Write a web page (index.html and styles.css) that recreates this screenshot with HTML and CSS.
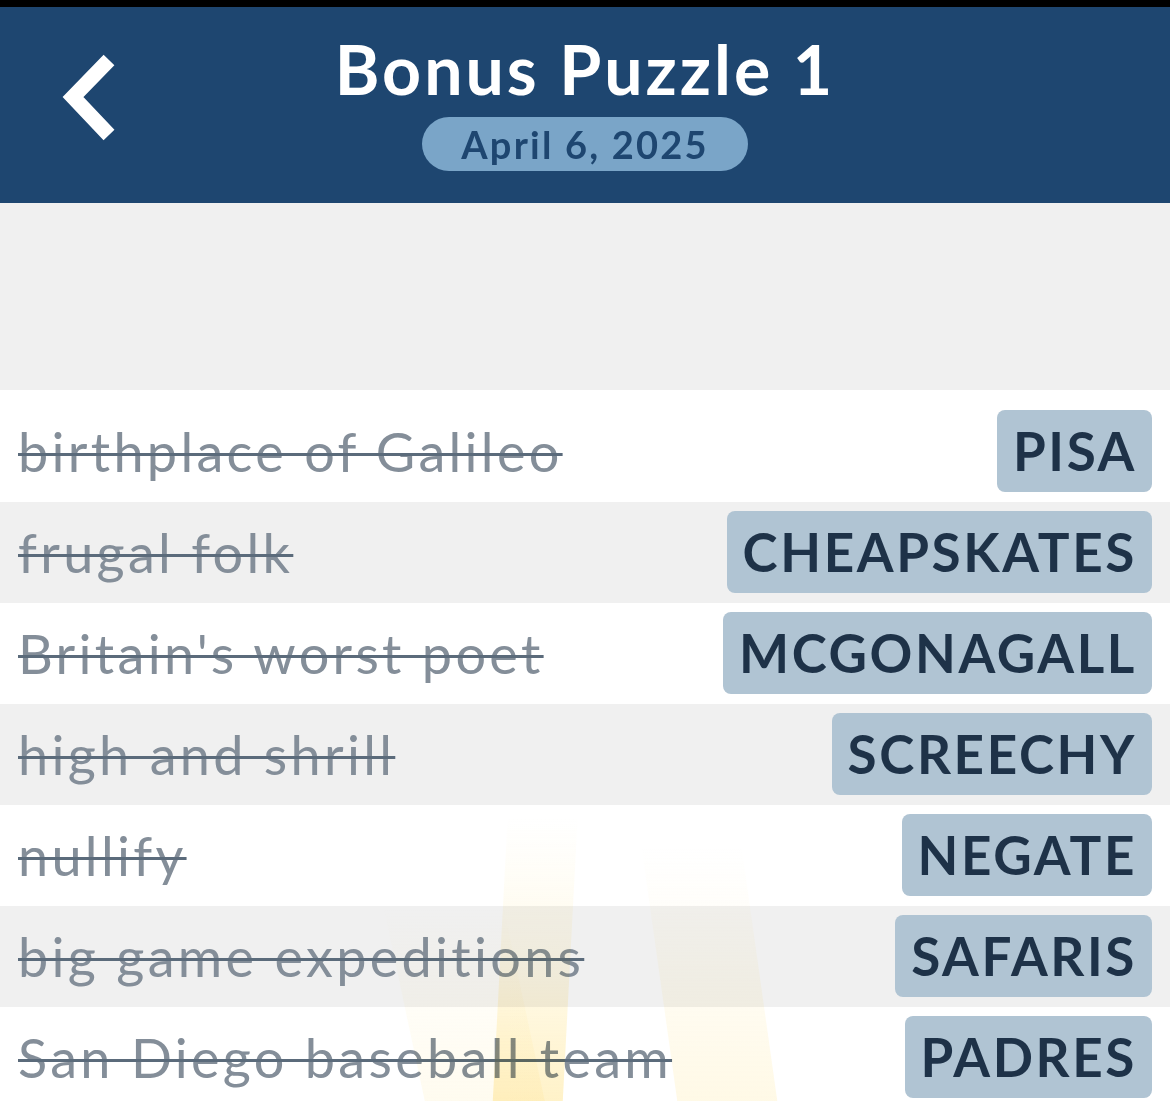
FILE: index.html
```html
<!DOCTYPE html>
<html>
<head>
<meta charset="utf-8">
<link rel="stylesheet" href="styles.css">
</head>
<body>
<div class="topbar"></div>
<header class="header">
  <svg class="back" width="70" height="110" viewBox="0 0 70 110">
    <polyline points="53,15 17,52 53,90" fill="none" stroke="#fff" stroke-width="15" stroke-linejoin="miter"/>
  </svg>
  <div class="title">Bonus Puzzle 1</div>
  <div class="date">April 6, 2025</div>
</header>
<div class="spacer"></div>
<main class="list">
  <div class="row"><span class="clue">birthplace of Galileo</span><span class="ans">PISA</span></div>
  <div class="row alt"><span class="clue">frugal folk</span><span class="ans">CHEAPSKATES</span></div>
  <div class="row"><span class="clue">Britain's worst poet</span><span class="ans">MCGONAGALL</span></div>
  <div class="row alt"><span class="clue">high and shrill</span><span class="ans">SCREECHY</span></div>
  <div class="row"><span class="clue">nullify</span><span class="ans">NEGATE</span></div>
  <div class="row alt"><span class="clue">big game expeditions</span><span class="ans">SAFARIS</span></div>
  <div class="row"><span class="clue">San Diego baseball team</span><span class="ans">PADRES</span></div>
  <div class="ray ray0"></div>
  <div class="ray ray1"></div>
  <div class="ray ray2"></div>
</main>
</body>
</html>
```
FILE: styles.css
```css
html, body {
  margin: 0;
  padding: 0;
  background: #ffffff;
  overflow: hidden;
}
body {
  width: 1170px;
  height: 1101px;
  font-family: Lato, "Noto Sans", sans-serif;
}
.topbar {
  height: 7px;
  background: #000;
}
.header {
  position: relative;
  height: 196px;
  background: #1e4670;
  display: flex;
  flex-direction: column;
  align-items: center;
}
.back {
  position: absolute;
  left: 56px;
  top: 38px;
}
.title {
  margin-top: 24px;
  color: #fff;
  font-weight: 700;
  font-size: 68px;
  line-height: 76px;
  letter-spacing: 3px;
}
.date {
  margin-top: 10px;
  height: 54px;
  width: 326px;
  border-radius: 27px;
  background: #7aa5c8;
  color: #1e4670;
  font-weight: 700;
  font-size: 38px;
  line-height: 54px;
  text-align: center;
  letter-spacing: 2.2px;
}
.spacer {
  height: 187px;
  background: #f0f0f0;
}
.list {
  position: relative;
  padding-top: 11px;
  background: #fff;
}
.row {
  height: 101px;
  display: flex;
  align-items: center;
  justify-content: space-between;
  padding: 0 18px;
  background: #fff;
}
.row.alt {
  background: #f0f0f0;
}
.clue {
  color: #848e99;
  font-size: 54px;
  letter-spacing: 3.3px;
  text-decoration: line-through;
  text-decoration-color: #5b6b7b;
  text-decoration-thickness: 3px;
}
.ans {
  height: 82px;
  line-height: 82px;
  padding: 0 15px 0 16px;
  border-radius: 8px;
  background: #b0c4d3;
  color: #1e3248;
  font-weight: 700;
  font-size: 53px;
  letter-spacing: 2.6px;
  margin-top: -2px;
}
.ray {
  position: absolute;
  pointer-events: none;
  mix-blend-mode: multiply;
  bottom: 0;
}
.ray0 {
  left: 405px;
  width: 120px;
  height: 200px;
  background: linear-gradient(to bottom, rgba(255,240,190,0), rgba(255,240,190,0.25));
  transform: skewX(12deg);
}
.ray1 {
  left: 500px;
  width: 70px;
  height: 290px;
  background: linear-gradient(to bottom, rgba(255,240,190,0), rgba(255,236,170,0.25) 50%, rgba(255,225,130,0.45));
  transform: skewX(-3deg);
}
.ray2 {
  left: 660px;
  width: 100px;
  height: 260px;
  background: linear-gradient(to bottom, rgba(255,245,210,0), rgba(255,240,190,0.22) 60%, rgba(255,235,170,0.3));
  transform: skewX(8deg);
}
```
